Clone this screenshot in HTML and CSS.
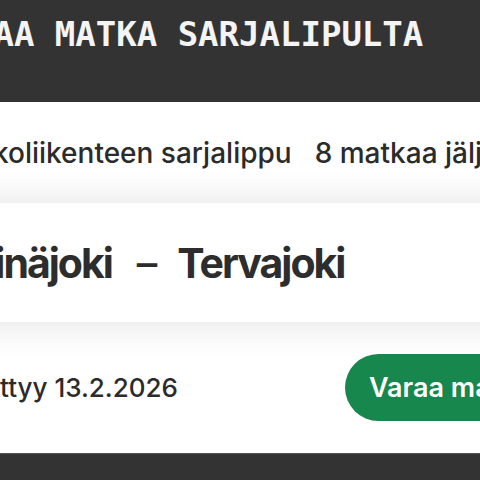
FILE: index.html
```html
<!DOCTYPE html>
<html lang="fi">
<head>
<meta charset="utf-8">
<title>Sarjalippu</title>
<link rel="stylesheet" href="styles.css">
</head>
<body>
<div class="page">
  <header class="topbar">
    <h1 class="topbar-title">VARAA MATKA SARJALIPULTA</h1>
  </header>
  <section class="info">
    <span class="info-name">Kaukoliikenteen sarjalippu</span>
    <span class="info-count">8 matkaa jäljellä</span>
  </section>
  <section class="route-card">
    <h2 class="route">
      <span>Seinäjoki</span>
      <span class="route-dash">–</span>
      <span>Tervajoki</span>
    </h2>
  </section>
  <section class="actions">
    <span class="expiry">Päättyy 13.2.2026</span>
    <button class="book-btn" type="button">Varaa matka</button>
  </section>
  <footer class="bottombar"></footer>
</div>
</body>
</html>
```
FILE: styles.css
```css
html, body {
  margin: 0;
  padding: 0;
  width: 480px;
  height: 480px;
  overflow: hidden;
  background: #ffffff;
}

.page {
  margin-left: -70px;
  width: 900px;
  font-family: Inter, "Liberation Sans", sans-serif;
  color: #2b2b2b;
}

.topbar {
  background: #333333;
  height: 102px;
  box-sizing: border-box;
  padding: 14px 0 0 2px;
}

.topbar-title {
  margin: 0;
  font-family: "DejaVu Sans Mono", "Liberation Mono", monospace;
  font-weight: bold;
  font-size: 34px;
  line-height: 40px;
  color: #f4f4f4;
}

.info {
  height: 101px;
  display: flex;
  align-items: center;
  gap: 23px;
  padding-left: 11px;
  font-size: 28px;
  font-weight: 500;
}

.route-card {
  height: 119px;
  background: #ffffff;
  display: flex;
  align-items: center;
  padding-left: 17px;
  box-shadow: 0 0 40px rgba(0, 0, 0, 0.12);
}

.route {
  margin: 0;
  display: flex;
  align-items: center;
  gap: 20px;
  font-size: 41px;
  font-weight: 700;
  letter-spacing: -2px;
  color: #2d2d2d;
}

.route-dash {
  margin-left: 5px;
  font-weight: 500;
  letter-spacing: 0;
}

.actions {
  height: 131px;
  display: flex;
  align-items: center;
  gap: 167px;
  padding-left: 24px;
}

.expiry {
  font-size: 26px;
  font-weight: 500;
}

.book-btn {
  height: 67px;
  padding: 0 24px;
  border: none;
  border-radius: 34px;
  background: #17874d;
  color: #ffffff;
  font-family: Inter, "Liberation Sans", sans-serif;
  font-size: 27px;
  font-weight: 600;
  white-space: nowrap;
}

.bottombar {
  height: 40px;
  background: #333333;
  border-top: 1px solid #555555;
}
```
